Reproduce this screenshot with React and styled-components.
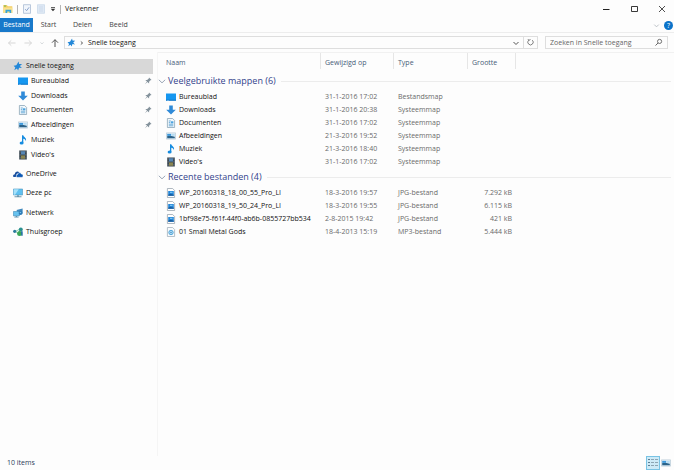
import React from "react";
import styled, { createGlobalStyle } from "styled-components";

const GlobalStyle = createGlobalStyle`
  * { box-sizing: border-box; }
  body {
    margin: 0;
    background: #fdfdfd;
    color: #111;
    font: 7px/12px "Open Sans", "Noto Sans", sans-serif;
  }
  button, input { font: inherit; color: inherit; border: 0; padding: 0; margin: 0; background: none; }
  svg { display: block; flex: none; }
  ul { list-style: none; margin: 0; padding: 0; }
`;

const Window = styled.div`
  min-height: 100vh;
  display: flex;
  flex-direction: column;
`;

const TitleBar = styled.header`
  height: 18px;
  display: flex;
  align-items: center;
  padding-left: 3px;
  gap: 4px;
`;
const Title = styled.h1`
  flex: 1;
  margin: 0;
  font-size: 7px;
  font-weight: 400;
  color: #111;
`;
const Divider = styled.span`
  width: 1px;
  height: 9px;
  background: #b5b5b5;
`;
const IconButton = styled.button`
  display: flex;
  align-items: center;
  justify-content: center;
  flex: none;
  width: ${(p) => p.$w || 10}px;
  height: ${(p) => p.$h || 14}px;
  color: ${(p) => (p.$faint ? "#b4bac0" : "#555")};
`;

const Ribbon = styled.nav`
  height: 15px;
  display: flex;
  align-items: stretch;
  border-bottom: 1px solid #ededed;
`;
const Tab = styled.button`
  width: ${(p) => p.$w}px;
  text-align: center;
  background: ${(p) => (p.$active ? "#1979ca" : "transparent")};
  color: ${(p) => (p.$active ? "#fff" : "#444")};
`;
const RibbonEnd = styled.div`
  margin-left: auto;
  display: flex;
  align-items: center;
  gap: 3px;
  padding-right: 1px;
`;

const AddressRow = styled.div`
  height: 19px;
  display: flex;
  align-items: center;
  padding: 0 6px 0 4px;
`;
const AddressBox = styled.div`
  flex: 1;
  height: 13px;
  margin-left: 2px;
  display: flex;
  align-items: center;
  border: 1px solid #dedede;
  padding-left: 2px;
  gap: 3px;
`;
const Crumb = styled.button`
  flex: 1;
  text-align: left;
  color: #111;
`;
const Refresh = styled(IconButton)`
  border-left: 1px solid #dedede;
`;
const SearchBox = styled.label`
  width: 123px;
  height: 13px;
  margin-left: 7px;
  display: flex;
  align-items: center;
  border: 1px solid #dedede;
  padding: 0 4px;
`;
const SearchInput = styled.input`
  flex: 1;
  min-width: 0;
  outline: 0;
  &::placeholder { color: #666; opacity: 1; }
`;

const Body = styled.div`
  flex: 1;
  display: flex;
`;
const Sidebar = styled.aside`
  width: 158px;
  flex: none;
  padding: 7px 4px 0 0;
  border-right: 1px solid #f5f5f5;
`;
const Tree = styled.ul`
  display: grid;
  grid-auto-rows: 1fr;
  height: ${(p) => p.$h}px;
  margin-bottom: 2px;
`;
const TreeItem = styled.li`
  display: flex;
  background: ${(p) => (p.$selected ? "#d8d8d8" : "transparent")};
`;
const TreeLink = styled.a`
  flex: 1;
  display: flex;
  align-items: center;
  gap: 3px;
  padding: 0 0 0 ${(p) => (p.$nested ? 18 : 13)}px;
  color: #111;
  text-decoration: none;
`;
const Label = styled.span`
  flex: 1;
  white-space: nowrap;
`;

const Content = styled.main`
  flex: 1;
  min-width: 0;
  border-top: 1px solid #f1f1f1;
`;
const Table = styled.table`
  width: 100%;
  table-layout: fixed;
  border-collapse: collapse;
`;
const Col = styled.col`
  width: ${(p) => (p.$w ? p.$w + "px" : "auto")};
`;
const HeadCell = styled.th`
  height: 19px;
  padding: 0 0 0 ${(p) => (p.$first ? 8 : 4)}px;
  text-align: left;
  font-weight: 400;
  color: #465c78;
  background: linear-gradient(#e6e6e6, #e6e6e6) right top / ${(p) => (p.$last ? 0 : 1)}px 16px no-repeat;
`;
const GroupCell = styled.th`
  height: 18px;
  padding: 0 3px 0 0;
  font-weight: 400;
`;
const GroupButton = styled.button`
  width: 100%;
  display: flex;
  align-items: center;
  gap: 2px;
  color: #33438c;
  font-size: 9px;
  white-space: nowrap;
  &::after {
    content: "";
    flex: 1;
    height: 1px;
    margin-left: 3px;
    background: #ececec;
  }
`;
const Cell = styled.td`
  height: 13px;
  padding: 0 4px;
  white-space: nowrap;
  color: #6a6a6a;
  text-align: ${(p) => (p.$right ? "right" : "left")};
`;
const NameCell = styled(Cell)`
  padding: 0 0 0 8px;
  color: #111;
`;
const FileName = styled.div`
  display: flex;
  align-items: center;
  gap: 3px;
`;

const StatusBar = styled.footer`
  height: 14px;
  display: flex;
  align-items: center;
  padding: 0 2px 0 7px;
  color: #2c3b58;
`;
const ViewButton = styled(IconButton)`
  background: ${(p) => (p.$on ? "#cdeaf7" : "transparent")};
  border: ${(p) => (p.$on ? "1px solid #79c3e4" : "0")};
`;

const drawings = {
  star: <path d="M5.600.6l.5 2.300 3 .2-2.200 1.800 2 2.200-2.800-.3-1 2.600-1.200-2L1.300 9.200l1-2.600L.6 4.800l2.700-.5z" fill="#2488d8" />,
  desktop: (
    <>
      <path d="M0 1.500h10v7H0z" fill="#1697f0" />
      <path d="M0 7.700h10v1H0z" fill="#1576c4" />
      <path d="M1 7.900h2v.5H1z" fill="#8fd0ff" />
    </>
  ),
  download: <path d="M3.200.5h3.600v4.200h3L5 9.600.2 4.700h3z" fill="#2f8ad8" />,
  document: (
    <>
      <path d="M1.400.5h5.200l2 2v7H1.400z" fill="#f2f8fc" stroke="#8ba6b8" strokeWidth=".8" />
      <path d="M2.800 3h2M2.800 4.600h1.600M2.800 6.200h4.500M2.800 7.800h4.500" stroke="#4d9bd0" strokeWidth=".8" />
      <path d="M5 3.300h2.400v2H5z" fill="#4ba3df" />
    </>
  ),
  picture: (
    <>
      <path d="M.4 1.900h9.200v6.200H.4z" fill="#e4f2fb" stroke="#b3c6d2" strokeWidth=".7" />
      <path d="M1.200 2.900h4v2h-4z" fill="#3c97da" />
      <path d="M1.200 4.900h4.300l3.300.8v1.500H1.200z" fill="#2b6288" />
      <path d="M5.800 3h2.900v1.800H5.800z" fill="#b4dcf3" />
    </>
  ),
  music: (
    <>
      <path d="M4 .2h1.300c.3 2 3.700 2.400 2.600 6-.3-1.700-1.200-2.300-2.600-2.500v4H4z" fill="#168ce0" />
      <ellipse cx="3.600" cy="8" rx="2" ry="1.600" fill="#168ce0" />
    </>
  ),
  video: (
    <>
      <path d="M1.200.5h7.600v9H1.200z" fill="#333f4a" />
      <path d="M3 1.200h4v3.400H3z" fill="#5686b4" />
      <path d="M3 5.400h4v3.400H3z" fill="#8a8552" />
      <path d="M2.100 1v8M7.900 1v8" stroke="#aab3ba" strokeWidth=".6" strokeDasharray=".7 .8" />
    </>
  ),
  cloud: (
    <>
      <path d="M0 7.300C0 6 .8 5.300 1.800 5.200 1.900 2.600 4.900 1.600 6.300 3.500L3.600 5 2.800 8H1C.4 8 0 7.800 0 7.300z" fill="#1a4f9e" />
      <path d="M3.300 7.200c0-1 .6-1.600 1.400-1.700.3-2 2.900-2.200 3.500-.4C9.400 5.100 10 6 10 6.900 10 7.800 9.400 8.300 8.700 8.300H4.300c-.6 0-1-.5-1-1.100z" fill="#0f5ab4" stroke="#fdfdfd" strokeWidth=".3" />
    </>
  ),
  computer: (
    <>
      <path d="M.4 1h9.200v6H.4z" fill="#5fc0f0" stroke="#4c94bd" strokeWidth=".6" />
      <path d="M.8 1.300h5L2 6.700H.8z" fill="#a5e1fb" />
      <path d="M4 7.200h2v1H4zM1.500 8.300h7v.9h-7z" fill="#6c96ad" />
    </>
  ),
  network: (
    <>
      <path d="M3.500 2L9.600.6v5l-4 1z" fill="#3f88bd" />
      <path d="M.4 3.500h6v4.400h-6z" fill="#66c2ef" stroke="#3f88b3" strokeWidth=".6" />
      <path d="M2.700 8h1.500v.7H2.700zM1.300 8.700h4.300v.7H1.300z" fill="#5f8fae" />
      <circle cx="7.600" cy="5" r="1.900" fill="#2c79b5" />
      <path d="M6.400 4.500l1.200-.8.8.8-1 .8z" fill="#7cc7ed" />
    </>
  ),
  homegroup: (
    <>
      <path d="M2 4.500L7.500 2M2 4.500l5.500 3" stroke="#8fd0ac" strokeWidth="1" />
      <circle cx="1.700" cy="4.300" r="1.600" fill="#2a7a9c" />
      <circle cx="7.800" cy="2.500" r="2" fill="#2a9090" />
      <circle cx="6.600" cy="6.500" r="2.500" fill="#39a657" />
      <path d="M8 4.200h1.700v4.500H8.300z" fill="#246ea8" />
    </>
  ),
  jpg: (
    <>
      <path d="M1.400.5h5.200l2 2v7H1.400z" fill="#fff" stroke="#8d9aa5" strokeWidth=".7" />
      <path d="M2.200 3h5.600v4.800H2.200z" fill="#2488da" />
      <path d="M2.200 7.800V6.700l2-.9 3.600 1v1z" fill="#1c5c9c" />
      <path d="M4 3.800h2.500v1H4z" fill="#93d2f7" />
    </>
  ),
  mp3: (
    <>
      <path d="M1.400.5h5.200l2 2v7H1.400z" fill="#f8fbfd" stroke="#9aa8b3" strokeWidth=".7" />
      <circle cx="5" cy="5.500" r="2.200" fill="#b5ddf4" stroke="#3797d2" strokeWidth=".8" />
      <circle cx="5" cy="5.500" r=".7" fill="#2c82bd" />
    </>
  ),
  pin: (
    <path d="M6 1.500l2.600 2.600-1.100.1-1.400 1.500v1.800L4.400 6 1.700 8.500 4 5.600 2.300 4l1.800-.1L5.800 2.500z" fill="#84929c" />
  ),
  folder: (
    <>
      <path d="M.3 1h3.500l1 1.200h4.500V9H.3z" fill="#f2cc62" />
      <path d="M.3 3.500h9V9H.3z" fill="#fbe28e" />
      <path d="M2.500 9V5.800h5.700V9H6.600V7.400H4.200V9z" fill="#36a4d8" />
      <path d="M1 1.600h2v1H1z" fill="#6cb857" />
    </>
  ),
  properties: (
    <>
      <path d="M1.500.7h7v8.600h-7z" fill="#f0f5fb" stroke="#a9bbd3" strokeWidth=".8" />
      <path d="M3.200 5.200l1.400 1.500 2.500-3.400" fill="none" stroke="#7f9ac6" strokeWidth=".9" />
    </>
  ),
  newFolder: <path d="M1.500.7h7v8.600h-7zM3 3h4M3 5h4M3 7h4" fill="#dfe9f5" stroke="#c6d5e8" strokeWidth=".7" />,
  customize: <path d="M2.500 2.500h5v1h-5zM2.200 4.800h5.600L5 7.800z" fill="#333" />,
  minimize: <path d="M2 5.500h6.500" stroke="#222" />,
  maximize: <path d="M2.500 2.500h6v5h-6z" fill="none" stroke="#222" strokeWidth=".9" />,
  close: <path d="M2 2l6 6M8 2L2 8" stroke="#222" strokeWidth=".8" />,
  chevron: <path d="M2.500 4l2.500 2.500L7.500 4" fill="none" stroke="currentColor" />,
  groupChevron: <path d="M1 3.500L5 7.300l4-3.800" fill="none" stroke="#8190a6" />,
  crumbChevron: <path d="M3 2.500L6 5 3 7.500" fill="none" stroke="#333" strokeWidth="1.300" />,
  back: <path d="M8.500 5h-7M4.300 2.300L1.500 5l2.800 2.700" fill="none" stroke="#d2d2d2" strokeWidth=".9" />,
  forward: <path d="M1.500 5h7M5.700 2.300L8.500 5 5.700 7.700" fill="none" stroke="#d2d2d2" strokeWidth=".9" />,
  up: <path d="M5 9V1.700M2 4.700l3-3 3 3" fill="none" stroke="#555" />,
  refresh: <path d="M3 2.400a3 3 0 1 0 4 0M2.200 1.200l.9 1.400 1.900-.9" fill="none" stroke="#666" strokeWidth=".9" />,
  search: (
    <>
      <circle cx="6.200" cy="3.800" r="2.300" fill="none" stroke="#555" strokeWidth=".9" />
      <path d="M4.500 5.500L1.700 8.400" stroke="#555" />
    </>
  ),
  details: (
    <>
      <path d="M0 1.500h2M0 4.500h2M0 7.500h2" stroke="#5c7d93" />
      <path d="M3 1.500h3M3 4.500h3M3 7.500h3M7 1.500h3M7 4.500h3M7 7.500h3" stroke="#8da5b3" />
    </>
  ),
};

const Icon = ({ name, size = 10 }) => (
  <svg width={size} height={size} viewBox="0 0 10 10" aria-hidden="true">
    {drawings[name]}
  </svg>
);

const HelpIcon = styled.span`
  width: 9px;
  height: 9px;
  border-radius: 50%;
  background: #0b73c9;
  color: #fff;
  font-size: 7px;
  line-height: 9px;
  text-align: center;
`;

const quickAccess = [
  { icon: "star", label: "Snelle toegang", selected: true },
  { icon: "desktop", label: "Bureaublad", nested: true, pinned: true },
  { icon: "download", label: "Downloads", nested: true, pinned: true },
  { icon: "document", label: "Documenten", nested: true, pinned: true },
  { icon: "picture", label: "Afbeeldingen", nested: true, pinned: true },
  { icon: "music", label: "Muziek", nested: true },
  { icon: "video", label: "Video's", nested: true },
];
const places = [
  { icon: "cloud", label: "OneDrive" },
  { icon: "computer", label: "Deze pc" },
  { icon: "network", label: "Netwerk" },
  { icon: "homegroup", label: "Thuisgroep" },
];
const groups = [
  {
    title: "Veelgebruikte mappen (6)",
    rows: [
      ["desktop", "Bureaublad", "31-1-2016 17:02", "Bestandsmap", ""],
      ["download", "Downloads", "31-1-2016 20:38", "Systeemmap", ""],
      ["document", "Documenten", "31-1-2016 17:02", "Systeemmap", ""],
      ["picture", "Afbeeldingen", "21-3-2016 19:52", "Systeemmap", ""],
      ["music", "Muziek", "21-3-2016 18:40", "Systeemmap", ""],
      ["video", "Video's", "31-1-2016 17:02", "Systeemmap", ""],
    ],
  },
  {
    title: "Recente bestanden (4)",
    rows: [
      ["jpg", "WP_20160318_18_00_55_Pro_LI", "18-3-2016 19:57", "JPG-bestand", "7.292 kB"],
      ["jpg", "WP_20160318_19_50_24_Pro_LI", "18-3-2016 19:55", "JPG-bestand", "6.115 kB"],
      ["jpg", "1bf98e75-f61f-44f0-ab6b-0855727bb534", "2-8-2015 19:42", "JPG-bestand", "421 kB"],
      ["mp3", "01 Small Metal Gods", "18-4-2013 15:19", "MP3-bestand", "5.444 kB"],
    ],
  },
];

const TreeList = ({ items, height }) => (
  <Tree $h={height}>
    {items.map((item) => (
      <TreeItem key={item.label} $selected={item.selected}>
        <TreeLink href="#" $nested={item.nested}>
          <Icon name={item.icon} />
          <Label>{item.label}</Label>
          {item.pinned && <Icon name="pin" />}
        </TreeLink>
      </TreeItem>
    ))}
  </Tree>
);

export default function App() {
  return (
    <Window>
      <GlobalStyle />
      <TitleBar>
        <Icon name="folder" />
        <Divider />
        <IconButton aria-label="Eigenschappen"><Icon name="properties" /></IconButton>
        <IconButton aria-label="Nieuwe map"><Icon name="newFolder" /></IconButton>
        <IconButton $w={6} aria-label="Werkbalk aanpassen"><Icon name="customize" size={8} /></IconButton>
        <Divider />
        <Title>Verkenner</Title>
        <IconButton $w={24} aria-label="Minimaliseren"><Icon name="minimize" /></IconButton>
        <IconButton $w={24} aria-label="Maximaliseren"><Icon name="maximize" /></IconButton>
        <IconButton $w={24} aria-label="Sluiten"><Icon name="close" /></IconButton>
      </TitleBar>
      <Ribbon>
        <Tab $w={33} $active>Bestand</Tab>
        <Tab $w={31}>Start</Tab>
        <Tab $w={37}>Delen</Tab>
        <Tab $w={35}>Beeld</Tab>
        <RibbonEnd>
          <IconButton $faint aria-label="Lint uitvouwen"><Icon name="chevron" size={9} /></IconButton>
          <HelpIcon>?</HelpIcon>
        </RibbonEnd>
      </Ribbon>
      <AddressRow>
        <IconButton $w={15} aria-label="Terug"><Icon name="back" /></IconButton>
        <IconButton $w={18} aria-label="Vooruit"><Icon name="forward" /></IconButton>
        <IconButton $w={10} $faint aria-label="Recente locaties"><Icon name="chevron" size={6} /></IconButton>
        <IconButton $w={15} aria-label="Omhoog"><Icon name="up" /></IconButton>
        <AddressBox>
          <Icon name="star" size={9} />
          <Icon name="crumbChevron" size={6} />
          <Crumb>Snelle toegang</Crumb>
          <IconButton $w={9} $h={11} aria-label="Vorige locaties"><Icon name="chevron" /></IconButton>
          <Refresh $w={14} $h={11} aria-label="Vernieuwen"><Icon name="refresh" size={9} /></Refresh>
        </AddressBox>
        <SearchBox>
          <SearchInput type="text" aria-label="Zoeken" placeholder="Zoeken in Snelle toegang" />
          <Icon name="search" size={9} />
        </SearchBox>
      </AddressRow>
      <Body>
        <Sidebar>
          <TreeList items={quickAccess} height={103} />
          <TreeList items={places} height={78} />
        </Sidebar>
        <Content>
          <Table>
            <colgroup>
              <Col $w={163} />
              <Col $w={73} />
              <Col $w={74} />
              <Col $w={48} />
              <Col />
            </colgroup>
            <thead>
              <tr>
                <HeadCell $first>Naam</HeadCell>
                <HeadCell>Gewijzigd op</HeadCell>
                <HeadCell>Type</HeadCell>
                <HeadCell>Grootte</HeadCell>
                <HeadCell as="td" $last />
              </tr>
            </thead>
            {groups.map((group) => (
              <tbody key={group.title}>
                <tr>
                  <GroupCell colSpan={5}>
                    <GroupButton>
                      <Icon name="groupChevron" size={8} />
                      {group.title}
                    </GroupButton>
                  </GroupCell>
                </tr>
                {group.rows.map(([icon, name, date, type, size]) => (
                  <tr key={name}>
                    <NameCell>
                      <FileName>
                        <Icon name={icon} />
                        {name}
                      </FileName>
                    </NameCell>
                    <Cell>{date}</Cell>
                    <Cell>{type}</Cell>
                    <Cell $right>{size}</Cell>
                    <td />
                  </tr>
                ))}
              </tbody>
            ))}
          </Table>
        </Content>
      </Body>
      <StatusBar>
        <Label>10 items</Label>
        <ViewButton $w={14} $h={14} $on aria-label="Details"><Icon name="details" /></ViewButton>
        <ViewButton $w={12} $h={14} aria-label="Grote pictogrammen"><Icon name="picture" /></ViewButton>
      </StatusBar>
    </Window>
  );
}
